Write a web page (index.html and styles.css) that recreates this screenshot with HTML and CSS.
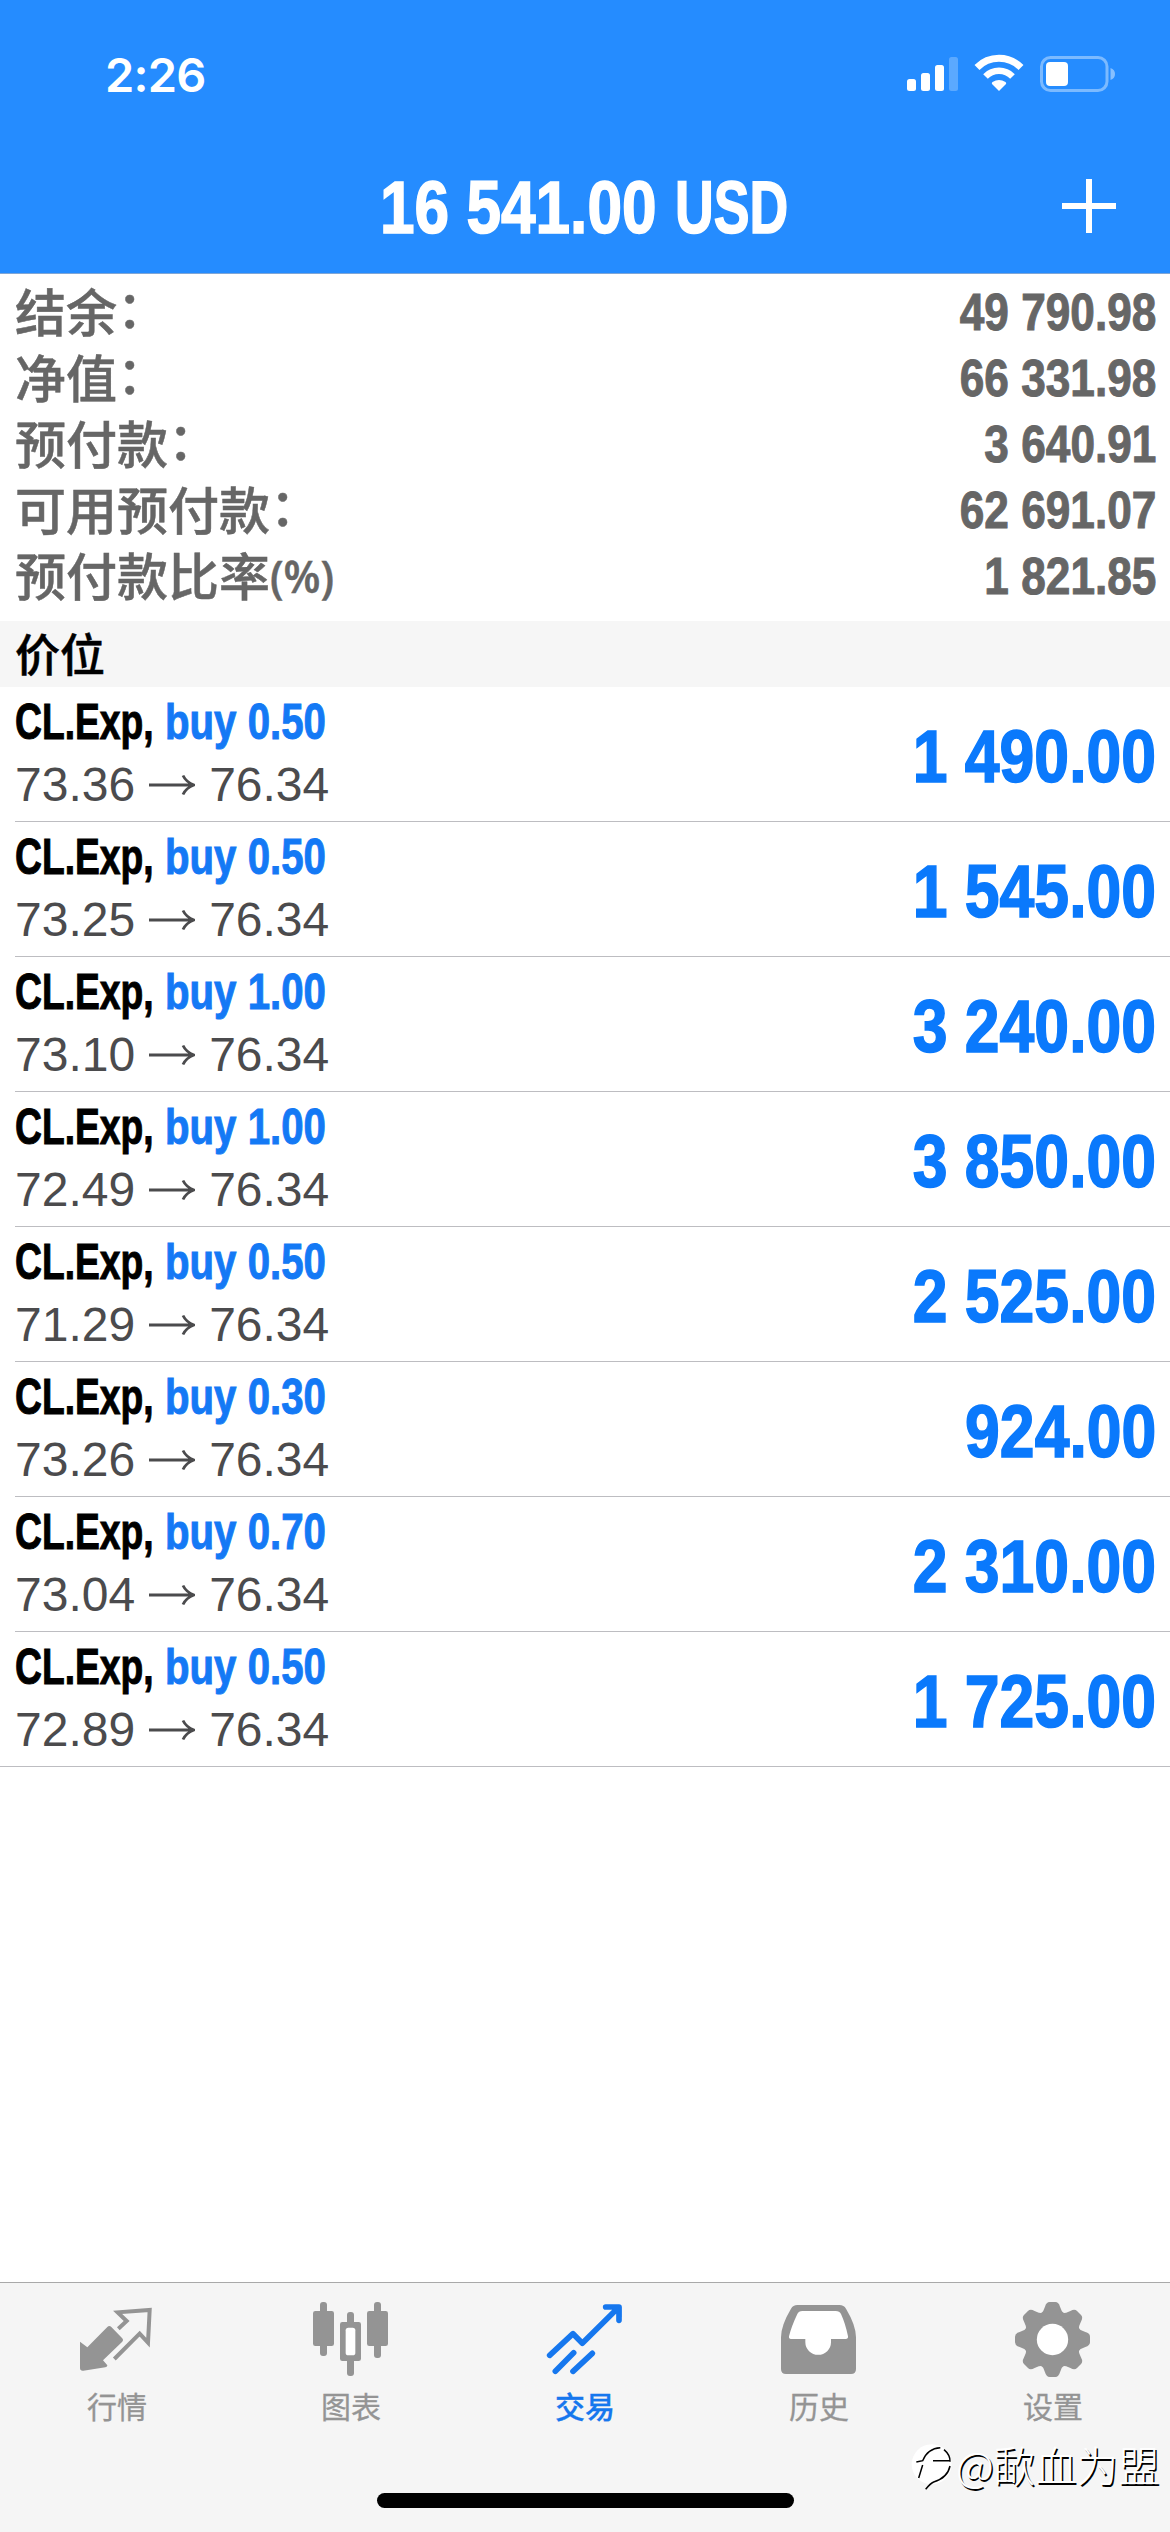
FILE: index.html
```html
<!DOCTYPE html>
<html lang="zh-CN">
<head>
<meta charset="utf-8">
<title>交易</title>
<link rel="stylesheet" href="styles.css">
</head>
<body>
<div class="screen">
  <header class="header">
    <div class="status">
      <span class="time">2:26</span>
      <svg class="status-icons" width="210" height="40" viewBox="906 54 210 40">
        <g fill="#fff">
          <rect x="907" y="79" width="9" height="12" rx="2.5"/>
          <rect x="921" y="73" width="9" height="18" rx="2.5"/>
          <rect x="935" y="65" width="9" height="26" rx="2.5"/>
          <rect x="949" y="57" width="9" height="34" rx="2.5" opacity=".25"/>
          <path d="M999 91l-7-7q-.6-1.200 .5-2q6.500-4 13 0q1.100.8.5 2z"/>
          <rect x="1046" y="62" width="22" height="24" rx="4"/>
          <path d="M1110.500 68q4.500 1.500 4.500 6t-4.500 6z" opacity=".45"/>
        </g>
        <g fill="none" stroke="#fff">
          <path d="M977 67.500a31 31 0 0 1 44 0" stroke-width="7"/>
          <path d="M985.500 76.500a19 19 0 0 1 27 0" stroke-width="6.500"/>
          <rect x="1041.500" y="57.500" width="65.500" height="33" rx="9" stroke-width="3" opacity=".4"/>
        </g>
      </svg>
    </div>
    <div class="navbar">
      <h1 class="profit"><span class="cond profit-num">16 541.00</span><span class="cond profit-cur">USD</span></h1>
      <svg class="plus" width="56" height="56" viewBox="0 0 56 56"><path d="M28 1v54M1 28h54" stroke="#fff" stroke-width="6"/></svg>
    </div>
  </header>

  <dl class="summary">
    <div class="sum-row"><dt>结余<i>：</i></dt><dd class="cond">49 790.98</dd></div>
    <div class="sum-row"><dt>净值<i>：</i></dt><dd class="cond">66 331.98</dd></div>
    <div class="sum-row"><dt>预付款<i>：</i></dt><dd class="cond">3 640.91</dd></div>
    <div class="sum-row"><dt>可用预付款<i>：</i></dt><dd class="cond">62 691.07</dd></div>
    <div class="sum-row"><dt>预付款比率<b class="pct">(%)</b></dt><dd class="cond">1 821.85</dd></div>
  </dl>

  <h2 class="section">价位</h2>
  <svg width="0" height="0" class="defs"><symbol id="arrow" viewBox="0 0 46 22"><path d="M0 11h44M34 1.500Q37 8 45 11Q37 14 34 20.500" fill="none" stroke="#4b4b4d" stroke-width="2.800"/></symbol></svg>
  <ul class="positions">
    <li><div class="info"><div class="deal"><span class="cond sym">CL.Exp,</span><span class="cond side">buy 0.50</span></div><div class="prices">73.36<svg><use href="#arrow"/></svg>76.34</div></div><span class="cond gain">1 490.00</span></li>
    <li><div class="info"><div class="deal"><span class="cond sym">CL.Exp,</span><span class="cond side">buy 0.50</span></div><div class="prices">73.25<svg><use href="#arrow"/></svg>76.34</div></div><span class="cond gain">1 545.00</span></li>
    <li><div class="info"><div class="deal"><span class="cond sym">CL.Exp,</span><span class="cond side">buy 1.00</span></div><div class="prices">73.10<svg><use href="#arrow"/></svg>76.34</div></div><span class="cond gain">3 240.00</span></li>
    <li><div class="info"><div class="deal"><span class="cond sym">CL.Exp,</span><span class="cond side">buy 1.00</span></div><div class="prices">72.49<svg><use href="#arrow"/></svg>76.34</div></div><span class="cond gain">3 850.00</span></li>
    <li><div class="info"><div class="deal"><span class="cond sym">CL.Exp,</span><span class="cond side">buy 0.50</span></div><div class="prices">71.29<svg><use href="#arrow"/></svg>76.34</div></div><span class="cond gain">2 525.00</span></li>
    <li><div class="info"><div class="deal"><span class="cond sym">CL.Exp,</span><span class="cond side">buy 0.30</span></div><div class="prices">73.26<svg><use href="#arrow"/></svg>76.34</div></div><span class="cond gain">924.00</span></li>
    <li><div class="info"><div class="deal"><span class="cond sym">CL.Exp,</span><span class="cond side">buy 0.70</span></div><div class="prices">73.04<svg><use href="#arrow"/></svg>76.34</div></div><span class="cond gain">2 310.00</span></li>
    <li><div class="info"><div class="deal"><span class="cond sym">CL.Exp,</span><span class="cond side">buy 0.50</span></div><div class="prices">72.89<svg><use href="#arrow"/></svg>76.34</div></div><span class="cond gain">1 725.00</span></li>
  </ul>

  <nav class="tabs">
    <a class="tab">
      <svg viewBox="234 120 234 240">
        <path d="M240 245L262 262L322 201Q328 195 334 201L366 234Q372 240 366 246L309 301L322 316Q323 321 316 322L250 332Q240 333 240 324Z" fill="currentColor"/>
        <path d="M355 206L380 183L353 157L449 150L444 248L419 221L343 297" fill="none" stroke="currentColor" stroke-width="12"/>
      </svg>
      <span>行情</span>
    </a>
    <a class="tab">
      <svg viewBox="936 120 234 240">
        <g fill="currentColor">
          <rect x="939" y="153" width="63" height="105" rx="7"/><rect x="960" y="126" width="21" height="162" rx="9"/>
          <rect x="1101" y="153" width="63" height="105" rx="7"/><rect x="1122" y="126" width="21" height="168" rx="9"/>
          <rect x="1020" y="186" width="63" height="117" rx="7"/><rect x="1041" y="156" width="21" height="192" rx="9"/>
        </g>
        <rect x="1037" y="203" width="29" height="83" rx="8" fill="#fff"/>
      </svg>
      <span>图表</span>
    </a>
    <a class="tab active">
      <svg viewBox="348 120 234 240">
        <path d="M359 286L429 221L457 250L566 142M527 141H567V181M376 334L431 278M429 334L487 280" fill="none" stroke="currentColor" stroke-width="17" stroke-linecap="round" stroke-linejoin="round"/>
        <path d="M540 140H574V172Z" fill="currentColor"/>
      </svg>
      <span>交易</span>
    </a>
    <a class="tab">
      <svg viewBox="150 120 234 240">
        <path d="M202 135H328Q342 135 348 146Q378 196 378 232V327Q378 342 363 342H168Q153 342 153 327V232Q153 196 183 146Q189 135 202 135Z" fill="currentColor"/>
        <path d="M217 153H317Q329 153 333 162Q346 190 354 229Q355 237 347 237H303V247A38 37 0 0 1 226 247V237H183Q176 237 177 229Q184 200 202 162Q206 153 217 153Z" fill="#fff"/>
      </svg>
      <span>历史</span>
    </a>
    <a class="tab">
      <svg viewBox="852 120 234 240">
        <g fill="currentColor">
          <circle cx="967.500" cy="238.500" r="87"/>
          <g id="teeth">
            <path id="tooth" d="M930 165Q941 155 945 140Q949 126 959 126H976Q986 126 990 140Q994 155 1005 165Z"/>
            <use href="#tooth" transform="rotate(45 967.500 238.500)"/>
            <use href="#tooth" transform="rotate(90 967.500 238.500)"/>
            <use href="#tooth" transform="rotate(135 967.500 238.500)"/>
          </g>
          <use href="#teeth" transform="rotate(180 967.500 238.500)"/>
        </g>
        <circle cx="967.500" cy="238.500" r="47" fill="#fff"/>
      </svg>
      <span>设置</span>
    </a>
    <div class="home"></div>
    <div class="mark">
      <svg width="42" height="50" viewBox="542 550 126 150">
        <circle cx="604" cy="620" r="60" fill="#fff"/>
        <path d="M558 613L577 609Q592 572 630 570M608 609H658M577 622L565 661M641 576Q660 592 659 612M659 625Q652 660 610 673Q600 677 586 695" fill="none" stroke="#000" stroke-width="4.500"/>
      </svg>
      <span>@歃血为盟</span>
    </div>
  </nav>
</div>
</body>
</html>
```
FILE: styles.css
```css
* { box-sizing: border-box; margin: 0; padding: 0; }
body { background: #fff; font-family: "Liberation Sans", "Noto Sans CJK SC", sans-serif; }
.screen { width: 1170px; height: 2532px; display: flex; flex-direction: column; overflow: hidden; background: #fff; }

.cond { display: inline-block; font-weight: 700; white-space: nowrap; transform: scaleX(.85); transform-origin: left center; -webkit-text-stroke: 1px currentColor; }

.header { height: 274px; background: #258cff; border-bottom: 1px solid #7fa6d6; color: #fff; }
.status { height: 140px; padding: 54px 54px 0 105px; display: flex; justify-content: space-between; align-items: flex-start; }
.time { font: 600 47px/42px Inter, sans-serif; letter-spacing: -.8px; }
.navbar { height: 133px; padding: 0 53px 0 380px; display: flex; justify-content: space-between; align-items: center; }
.profit { display: flex; padding-top: 3px; font-size: 74px; line-height: 84px; }
.profit-num { width: 295px; transform: scaleX(.84); }
.profit-cur { transform: scaleX(.725); }
.profit .cond, .gain { -webkit-text-stroke-width: 1.600px; }
.plus { margin-bottom: 1px; }

.summary { height: 347px; padding: 5px 14px 0 15px; color: #666; }
.sum-row { height: 66px; display: flex; justify-content: space-between; align-items: center; }
.sum-row dt { display: flex; align-items: center; margin-top: -5px; font: 500 51px/66px "Noto Sans CJK SC", sans-serif; -webkit-text-stroke: .5px currentColor; }
.sum-row dt i { margin-top: -8px; font-style: normal; }
.sum-row dd { font-size: 52px; line-height: 66px; transform-origin: right center; }
.pct { margin-top: 3px; font: 600 46px/60px "Open Sans", sans-serif; transform: scaleX(.93); transform-origin: left center; }

.section { height: 66px; padding-left: 15px; background: #f6f6f6; font: 500 45px/63px "Noto Sans CJK SC", sans-serif; color: #000; -webkit-text-stroke: .5px currentColor; }
.defs { position: absolute; }

.positions { list-style: none; }
.positions li { height: 135px; margin-left: 15px; padding-right: 14px; border-bottom: 1px solid #bdbdc1; display: flex; justify-content: space-between; align-items: center; }
.positions li:last-child { margin-left: 0; padding-left: 15px; }
.deal { display: flex; height: 63px; font-size: 50px; line-height: 63px; }
.sym { width: 150px; color: #000; transform: scaleX(.745); }
.side { color: #1479f5; transform: scaleX(.804); }
.prices { display: flex; align-items: center; height: 63px; font-size: 48px; line-height: 61px; padding-bottom: 2px; color: #4b4b4d; }
.prices svg { width: 46px; height: 22px; margin: 0 14px; }
.gain { padding-top: 5px; font-size: 74px; line-height: 84px; color: #0a79fc; transform: scaleX(.845); transform-origin: right center; }

.tabs { position: relative; height: 250px; margin-top: auto; padding-top: 17px; display: grid; grid-template-columns: repeat(5, 234px); background: #f5f5f5; border-top: 1px solid #a9a9a9; }
.tab { display: flex; flex-direction: column; align-items: center; color: #949494; font: 400 30px/42px "Noto Sans CJK SC", sans-serif; -webkit-text-stroke: .3px currentColor; }
.tab svg { width: 78px; height: 80px; margin-bottom: 4px; }
.tab.active { color: #1677ee; font-weight: 500; }
.home { position: absolute; left: 377px; top: 210px; width: 417px; height: 15px; border-radius: 8px; background: #000; }
.mark { position: absolute; left: 911px; top: 154px; display: flex; align-items: center; gap: 3px; }
.mark svg { margin-top: 4px; }
.mark span { font: 300 41.500px/50px "Noto Sans CJK SC", sans-serif; color: #fff; text-shadow: 1.500px 1.500px 0 #000; white-space: nowrap; }
```
